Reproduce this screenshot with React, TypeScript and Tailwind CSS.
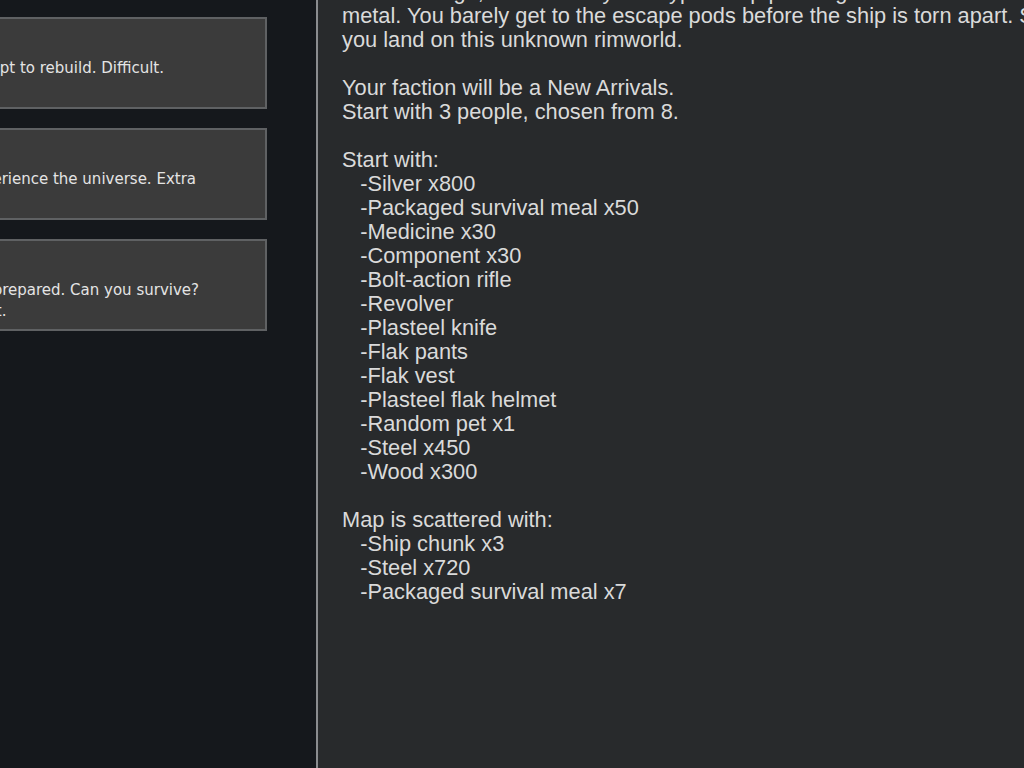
import React from "react";

const cards: { lines: string[]; pr: string }[] = [
  { lines: ["Five tribespeople attempt to rebuild. Difficult."], pr: "pr-[101px]" },
  { lines: ["A rich noble who wanted to experience the universe. Extra", "challenging."], pr: "pr-[69px]" },
  { lines: ["Naked, totally unprepared. Can you survive?", "Extremely difficult."], pr: "pr-[66px]" },
];

const rightLines: string[] = [
  "Centuries ago, the crew of your cryptosleep pod began to drift in the void. After",
  "metal. You barely get to the escape pods before the ship is torn apart. Some time later,",
  "you land on this unknown rimworld.",
  "",
  "Your faction will be a New Arrivals.",
  "Start with 3 people, chosen from 8.",
  "",
  "Start with:",
  "   -Silver x800",
  "   -Packaged survival meal x50",
  "   -Medicine x30",
  "   -Component x30",
  "   -Bolt-action rifle",
  "   -Revolver",
  "   -Plasteel knife",
  "   -Flak pants",
  "   -Flak vest",
  "   -Plasteel flak helmet",
  "   -Random pet x1",
  "   -Steel x450",
  "   -Wood x300",
  "",
  "Map is scattered with:",
  "   -Ship chunk x3",
  "   -Steel x720",
  "   -Packaged survival meal x7",
];

export default function App() {
  return (
    <div className="w-[1024px] h-[768px] flex overflow-hidden bg-[#15181c]">
      <div className="w-[316px] shrink-0 h-full bg-[#15181c] overflow-hidden flex flex-col pt-[17px] gap-[19px]">
        {cards.map((c, i) => (
          <div
            key={i}
            className="h-[92px] shrink-0 ml-[-300px] w-[567px] border-2 border-[#5f6163] bg-[#3b3b3b]"
          >
            <div className={`flex justify-end pt-[39px] ${c.pr}`}>
              <div
                className="whitespace-nowrap text-[15px] leading-[21px] text-[#e4e4e4]"
                style={{ fontFamily: '"DejaVu Sans", Verdana, sans-serif' }}
              >
                {c.lines.map((l, j) => (
                  <div key={j}>{l}</div>
                ))}
              </div>
            </div>
          </div>
        ))}
      </div>
      <div className="w-[2px] shrink-0 h-full bg-[#8a8c8f]" />
      <div className="flex-1 h-full bg-[#282a2c] overflow-hidden pl-[24px]">
        <div
          className="mt-[-20px] whitespace-pre text-[21.8px] leading-[24px] text-[#dadada]"
          style={{ fontFamily: '"Liberation Sans", Arial, sans-serif' }}
        >
          {rightLines.map((l, i) => (
            <div key={i} className="h-[24px]">
              {l}
            </div>
          ))}
        </div>
      </div>
    </div>
  );
}
